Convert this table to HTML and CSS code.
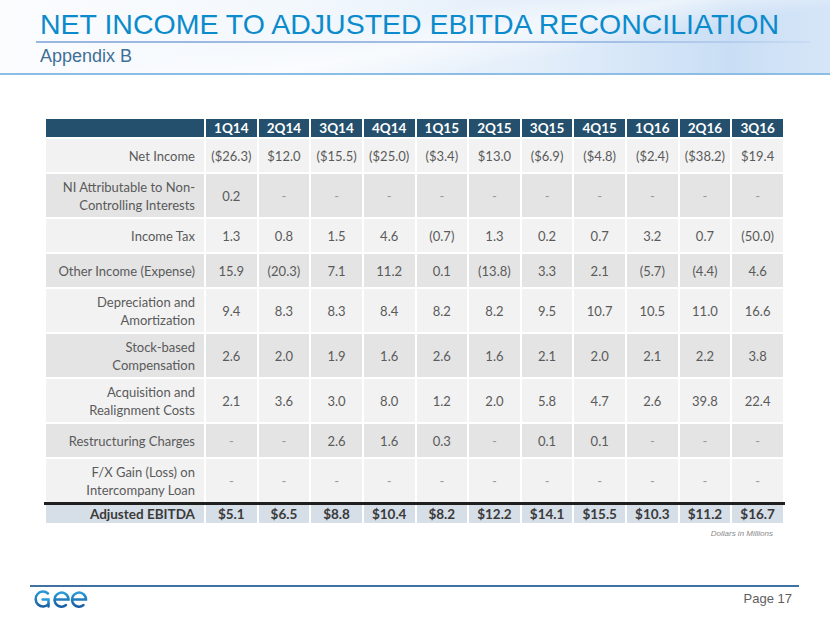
FILE: index.html
```html
<!DOCTYPE html>
<html lang="en">
<head>
<meta charset="utf-8">
<title>Net Income to Adjusted EBITDA Reconciliation</title>
<link rel="stylesheet" href="styles.css">
</head>
<body>
<header class="top">
  <h1 class="title">NET INCOME TO ADJUSTED EBITDA RECONCILIATION</h1>
  <div class="rule"></div>
  <h2 class="subtitle">Appendix B</h2>
</header>
<main class="content">
  <table class="recon">
    <colgroup>
      <col class="c-label">
      <col span="11">
    </colgroup>
    <thead>
      <tr class="hd">
        <th></th><th>1Q14</th><th>2Q14</th><th>3Q14</th><th>4Q14</th><th>1Q15</th><th>2Q15</th><th>3Q15</th><th>4Q15</th><th>1Q16</th><th>2Q16</th><th>3Q16</th>
      </tr>
    </thead>
    <tbody>
      <tr class="one lt">
        <td class="lbl">Net Income</td><td>($26.3)</td><td>$12.0</td><td>($15.5)</td><td>($25.0)</td><td>($3.4)</td><td>$13.0</td><td>($6.9)</td><td>($4.8)</td><td>($2.4)</td><td>($38.2)</td><td>$19.4</td>
      </tr>
      <tr class="two dk">
        <td class="lbl">NI Attributable to Non-<br>Controlling Interests</td><td>0.2</td><td class="d">-</td><td class="d">-</td><td class="d">-</td><td class="d">-</td><td class="d">-</td><td class="d">-</td><td class="d">-</td><td class="d">-</td><td class="d">-</td><td class="d">-</td>
      </tr>
      <tr class="one lt">
        <td class="lbl">Income Tax</td><td>1.3</td><td>0.8</td><td>1.5</td><td>4.6</td><td>(0.7)</td><td>1.3</td><td>0.2</td><td>0.7</td><td>3.2</td><td>0.7</td><td>(50.0)</td>
      </tr>
      <tr class="one dk">
        <td class="lbl">Other Income (Expense)</td><td>15.9</td><td>(20.3)</td><td>7.1</td><td>11.2</td><td>0.1</td><td>(13.8)</td><td>3.3</td><td>2.1</td><td>(5.7)</td><td>(4.4)</td><td>4.6</td>
      </tr>
      <tr class="two lt">
        <td class="lbl">Depreciation and<br>Amortization</td><td>9.4</td><td>8.3</td><td>8.3</td><td>8.4</td><td>8.2</td><td>8.2</td><td>9.5</td><td>10.7</td><td>10.5</td><td>11.0</td><td>16.6</td>
      </tr>
      <tr class="two dk">
        <td class="lbl">Stock-based<br>Compensation</td><td>2.6</td><td>2.0</td><td>1.9</td><td>1.6</td><td>2.6</td><td>1.6</td><td>2.1</td><td>2.0</td><td>2.1</td><td>2.2</td><td>3.8</td>
      </tr>
      <tr class="two lt">
        <td class="lbl">Acquisition and<br>Realignment Costs</td><td>2.1</td><td>3.6</td><td>3.0</td><td>8.0</td><td>1.2</td><td>2.0</td><td>5.8</td><td>4.7</td><td>2.6</td><td>39.8</td><td>22.4</td>
      </tr>
      <tr class="one dk">
        <td class="lbl">Restructuring Charges</td><td class="d">-</td><td class="d">-</td><td>2.6</td><td>1.6</td><td>0.3</td><td class="d">-</td><td>0.1</td><td>0.1</td><td class="d">-</td><td class="d">-</td><td class="d">-</td>
      </tr>
      <tr class="two lt">
        <td class="lbl">F/X Gain (Loss) on<br>Intercompany Loan</td><td class="d">-</td><td class="d">-</td><td class="d">-</td><td class="d">-</td><td class="d">-</td><td class="d">-</td><td class="d">-</td><td class="d">-</td><td class="d">-</td><td class="d">-</td><td class="d">-</td>
      </tr>
      <tr class="total">
        <td class="lbl">Adjusted EBITDA</td><td>$5.1</td><td>$6.5</td><td>$8.8</td><td>$10.4</td><td>$8.2</td><td>$12.2</td><td>$14.1</td><td>$15.5</td><td>$10.3</td><td>$11.2</td><td>$16.7</td>
      </tr>
    </tbody>
  </table>
  <p class="note">Dollars in Millions</p>
</main>
<footer class="foot">
  <svg class="logo" width="56" height="20" viewBox="0 0 56 20" aria-label="GEE Group">
    <defs>
      <linearGradient id="lg" x1="0" y1="0" x2="0" y2="1">
        <stop offset="0" stop-color="#2a9ad8"/>
        <stop offset="1" stop-color="#1a5fa3"/>
      </linearGradient>
    </defs>
    <g fill="none" stroke="url(#lg)" stroke-width="2.5" stroke-linecap="round">
      <path d="M15 4.5 A7.4 7.4 0 1 0 15.5 15"/>
      <path d="M9.5 10.5 H15.5 V17.5"/>
      <path d="M22 10.5 H35.5 A7 7 0 1 0 33 16"/>
      <path d="M39.5 10.5 H53 A7 7 0 1 0 50.5 16"/>
    </g>
  </svg>
  <span class="page">Page 17</span>
</footer>
</body>
</html>
```
FILE: styles.css
```css
html, body {
  margin: 0;
  padding: 0;
  background: #ffffff;
}

body {
  width: 830px;
  height: 623px;
  display: flex;
  flex-direction: column;
  overflow: hidden;
  font-family: "Liberation Sans", Arial, sans-serif;
}

.top {
  height: 73px;
  border-bottom: 2px solid #8cbde4;
  background:
    linear-gradient(170deg, rgba(255,255,255,0) 40%, rgba(255,255,255,0.6) 55%, rgba(255,255,255,0) 70%),
    linear-gradient(to right, #fbfcfe 0%, #f3f8fd 35%, #e3eefa 65%, #c9def5 88%, #d6e6f8 100%);
}

.title {
  margin: 0;
  padding: 10px 0 0 40px;
  font-size: 28.5px;
  line-height: 28px;
  font-weight: normal;
  color: #0b8bcb;
  white-space: nowrap;
}

.rule {
  height: 2px;
  margin: 3px 20px 0 36px;
  background: linear-gradient(to right, #98b6e0 0%, #a3bfe6 75%, rgba(163,191,230,0.2) 100%);
}

.subtitle {
  margin: 4px 0 0 40px;
  font-size: 18px;
  line-height: 18px;
  font-weight: normal;
  color: #3e6f97;
}

.content {
  padding: 42px 0 0 44px;
}

.recon {
  width: 741px;
  table-layout: fixed;
  border-collapse: collapse;
  font-family: Lato, "Open Sans", sans-serif;
  font-size: 13px;
  color: #5a5a5a;
}

.c-label {
  width: 160px;
}

.recon th,
.recon td {
  border: 2px solid #ffffff;
  padding: 0 1px;
  text-align: center;
  white-space: nowrap;
}

.recon .lbl {
  text-align: right;
  padding-right: 9px;
  line-height: 18px;
}

.hd th {
  height: 18px;
  background: #24506e;
  color: #ffffff;
  font-weight: bold;
  font-size: 13.5px;
}

.one td { height: 33px; }
.two td { height: 43px; }

.lt td { background: #f2f2f2; }
.dk td { background: #e4e4e4; }

.recon td.d {
  color: #9a9a9a;
}

.total td {
  height: 17px;
  background: #d6dee8;
  border-top: 3px solid #1f1f1f;
  font-weight: bold;
  font-size: 13.5px;
  color: #3a3a3a;
}

.note {
  margin: 4px 0 0 0;
  width: 729px;
  text-align: right;
  font-family: "Liberation Sans", Arial, sans-serif;
  font-style: italic;
  font-size: 8px;
  line-height: 10px;
  color: #8a8a8a;
}

.foot {
  margin: auto 31px 0 30px;
  height: 36px;
  border-top: 2px solid #3f72a3;
  display: flex;
  justify-content: space-between;
  align-items: flex-start;
}

.logo {
  display: block;
  margin: 2px 0 0 3px;
}

.page {
  margin: 5px 7px 0 0;
  font-family: "Liberation Sans", Arial, sans-serif;
  font-size: 13px;
  line-height: 14px;
  color: #5e5e5e;
}
```
